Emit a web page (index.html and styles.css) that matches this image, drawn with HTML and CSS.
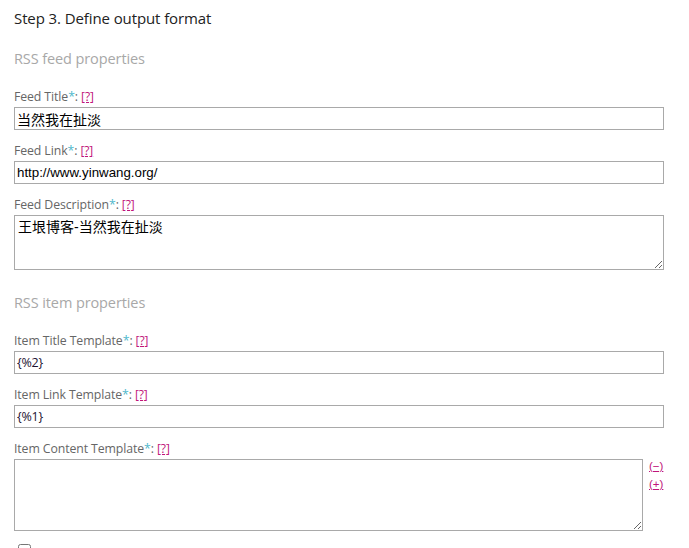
FILE: index.html
```html
<!DOCTYPE html>
<html>
<head>
<meta charset="utf-8">
<link rel="stylesheet" href="styles.css">
</head>
<body>
<div class="page">
  <h2 class="step">Step 3. Define output format</h2>

  <h3 class="section">RSS feed properties</h3>
  <div class="field">
    <div class="label">Feed Title<span class="req">*</span>: <a class="help" href="#">[?]</a></div>
    <input class="box cjk" type="text" value="当然我在扯淡">
  </div>
  <div class="field">
    <div class="label">Feed Link<span class="req">*</span>: <a class="help" href="#">[?]</a></div>
    <input class="box" type="text" value="http://www.yinwang.org/">
  </div>
  <div class="field">
    <div class="label">Feed Description<span class="req">*</span>: <a class="help" href="#">[?]</a></div>
    <textarea class="box area cjk">王垠博客-当然我在扯淡</textarea>
  </div>

  <h3 class="section second">RSS item properties</h3>
  <div class="field">
    <div class="label">Item Title Template<span class="req">*</span>: <a class="help" href="#">[?]</a></div>
    <input class="box small" type="text" value="{%2}">
  </div>
  <div class="field">
    <div class="label">Item Link Template<span class="req">*</span>: <a class="help" href="#">[?]</a></div>
    <input class="box small" type="text" value="{%1}">
  </div>
  <div class="field">
    <div class="label">Item Content Template<span class="req">*</span>: <a class="help" href="#">[?]</a></div>
    <div class="row">
      <textarea class="box area tall"></textarea>
      <div class="sizer">
        <a class="help" href="#">(−)</a>
        <a class="help" href="#">(+)</a>
      </div>
    </div>
  </div>
  <div class="check"><input type="checkbox"></div>
</div>
</body>
</html>
```
FILE: styles.css
```css
html, body {
  margin: 0;
  padding: 0;
  background: #fff;
}
.page {
  padding: 8px 25px 0 14px;
  font-family: "Open Sans", "Noto Sans", sans-serif;
  display: flex;
  flex-direction: column;
}
.step {
  margin: 0;
  font-size: 15px;
  font-weight: normal;
  line-height: 20px;
  color: #222;
  letter-spacing: -0.1px;
}
.section {
  margin: 21px 0 0 0;
  font-size: 14.5px;
  font-weight: normal;
  line-height: 20px;
  color: #a8a8a8;
  letter-spacing: -0.1px;
}
.section.second {
  margin-top: 23px;
}
.field {
  display: flex;
  flex-direction: column;
  margin-top: 20px;
}
.section.second + .field {
  margin-top: 20px;
}
.field + .field {
  margin-top: 13px;
}
.label {
  font-size: 12.3px;
  line-height: 16px;
  color: #666;
  margin-bottom: 2px;
  letter-spacing: -0.1px;
}
.req {
  color: #4fb8cc;
}
.help {
  color: #c0157a;
  text-decoration: underline;
  font-size: 12px;
}
.box {
  box-sizing: border-box;
  width: 650px;
  height: 23px;
  margin: 0;
  border: 1px solid #a9a9a9;
  padding: 1px 2px;
  font-family: "Liberation Sans", Arial, sans-serif;
  font-size: 13.3px;
  color: #000;
  background: #fff;
  outline: none;
}
.box.cjk {
  font-family: "Liberation Sans", "Noto Sans CJK SC", sans-serif;
  font-size: 14px;
}
.box.small {
  font-family: "Open Sans", sans-serif;
  font-size: 12.5px;
  color: #1c1230;
  letter-spacing: -0.2px;
}
.area {
  height: 55px;
  resize: both;
  padding: 2px 3px;
  line-height: 18px;
}
.row {
  display: flex;
  align-items: flex-start;
  gap: 6px;
}
.area.tall {
  width: 629px;
  height: 72px;
}
.sizer {
  display: flex;
  flex-direction: column;
  gap: 2px;
  margin-top: -1px;
}
.sizer .help {
  font-size: 11.5px;
  line-height: 16px;
  font-family: "Liberation Sans", sans-serif;
}
.check {
  display: flex;
  margin-top: 13px;
  padding-left: 4px;
}
.check input {
  margin: 0;
  width: 13px;
  height: 13px;
}
```
